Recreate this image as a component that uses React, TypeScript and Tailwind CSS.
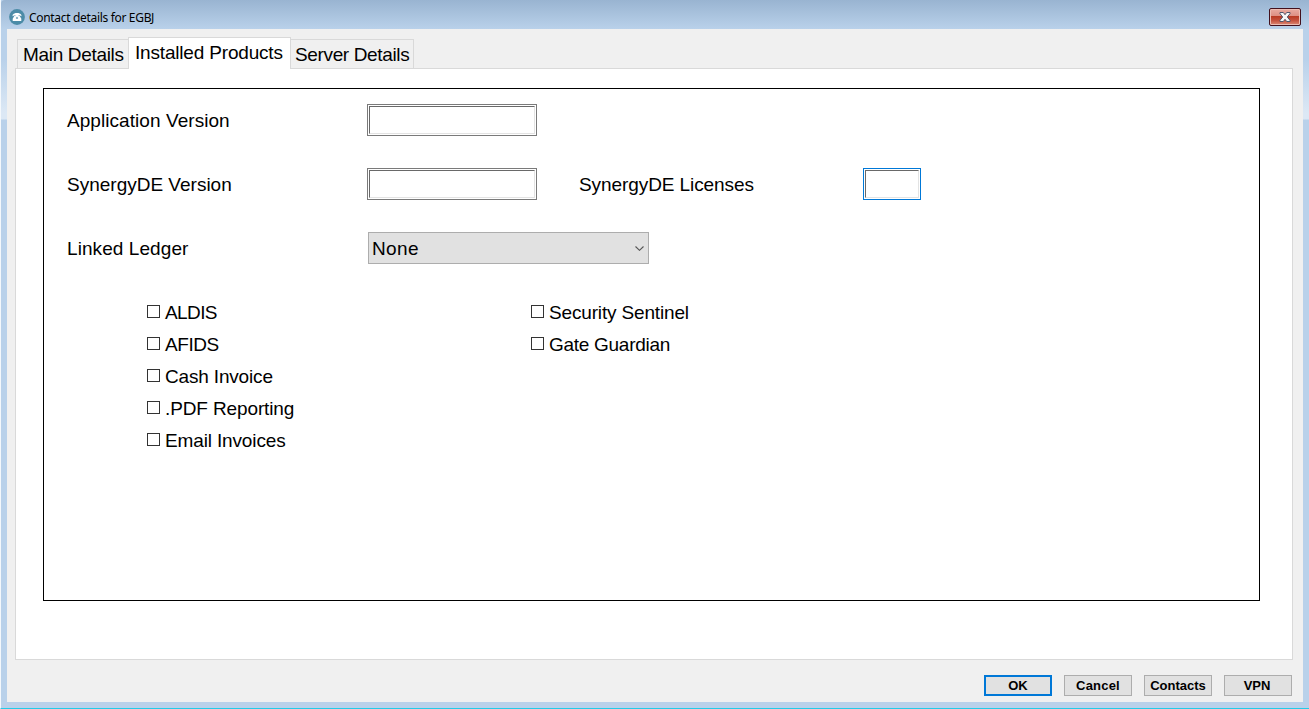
import React from "react";

function Field({ className = "", focused = false }: { className?: string; focused?: boolean }) {
  return (
    <div className={`h-8 shrink-0 border bg-white p-px ${focused ? "border-[#0078d7]" : "border-[#7a7a7a]"} ${className}`}>
      <input className="block h-full w-full border border-t-[#696969] border-r-[#e3e3e3] border-b-[#e3e3e3] border-l-[#696969] bg-white px-1 outline-none" />
    </div>
  );
}

function Check({ label, spacing }: { label: string; spacing: string }) {
  return (
    <label className="flex h-8 items-center">
      <span className="mr-[5px] mb-px h-[13px] w-[13px] shrink-0 border border-[#333] bg-white" />
      <span className={`whitespace-nowrap ${spacing}`}>{label}</span>
    </label>
  );
}

function DialogButton({ label, primary = false, spacing = "" }: { label: string; primary?: boolean; spacing?: string }) {
  return (
    <button
      className={`flex h-[21px] w-[68px] items-center justify-center bg-[#e1e1e1] text-[13px] leading-none font-bold text-black ${primary ? "border-2 border-[#0078d7]" : "border border-[#adadad]"} ${spacing}`}
    >
      {label}
    </button>
  );
}

function PhoneIcon() {
  return (
    <svg className="h-4 w-4" viewBox="0 0 16 16">
      <circle cx="8" cy="8" r="7.9" fill="#4b8ba7" />
      <path d="M3.6 7.200V5.900C4.600 4.400 6 3.900 8 3.900s3.400.5 4.400 2v1.300L10.600 6.300H5.400z" fill="#fff" />
      <path d="M6 5.800h4l2.300 3.900v2.300H3.700V9.700z" fill="#fff" />
      <circle cx="8" cy="8.900" r="1.200" fill="#8fb6c8" />
      <path d="M5.600 6.700h1M9.400 6.700h1" stroke="#4b8ba7" strokeWidth=".6" />
    </svg>
  );
}

function CloseButton() {
  return (
    <button className="flex h-[18px] w-8 items-center justify-center rounded-[2px] border border-[#43111d] bg-[linear-gradient(#e9aba1_0,#dd8e82_45%,#b93b24_46%,#c4503c_70%,#dc8b78_100%)] shadow-[inset_0_0_0_1px_#edbdb3]">
      <svg className="mb-px h-[10px] w-3" viewBox="0 0 12 10">
        <path d="M1 .5h3.300L6 2.700 7.700.5H11v1.200L8.300 5 11 8.300v1.200H7.700L6 7.300 4.300 9.500H1V8.300L3.700 5 1 1.700z" fill="#f5f5f5" stroke="#52566b" strokeWidth="1" />
      </svg>
    </button>
  );
}

export default function App() {
  return (
    <div className="flex h-[709px] w-[1309px] flex-col overflow-hidden border-b border-l border-b-[#22cce8] border-l-[#f4f8fc] bg-[#b9d1ea] font-['Liberation_Sans',Arial,sans-serif] text-[19px] leading-none text-black">
      <header className="flex h-[29px] shrink-0 items-start justify-between rounded-tl-[4px] bg-[linear-gradient(#99b4d1,#b9d1ea)] pr-2 pl-2">
        <div className="flex pt-[9px]">
          <PhoneIcon />
          <h1 className="ml-1 pt-px font-['Noto_Sans',sans-serif] text-[12px] leading-[16px] tracking-[-0.32px]">Contact details for EGBJ</h1>
        </div>
        <div className="pt-2">
          <CloseButton />
        </div>
      </header>
      <div className="flex h-[679px] pb-[6px]">
        <div className="w-[6px] shrink-0 bg-[linear-gradient(#b9d1ea_0,#b9d1ea_30px,#dce8f5_84px,#dce8f5_90px,#b9d1ea_91px)]" />
        <main className="flex w-[1296px] shrink-0 flex-col bg-[#f0f0f0] px-2 pt-2">
          <nav className="flex h-8 items-end pl-[2px]">
            <div className="h-[30px] w-[111px] border-t border-l border-[#d9d9d9] pt-[5px] pl-[5px] tracking-[-0.32px] whitespace-nowrap">Main Details</div>
            <div className="relative z-10 h-8 w-[163px] border-x border-t border-[#d9d9d9] bg-white pt-[5px] pl-[6px] tracking-[-0.18px] whitespace-nowrap">Installed Products</div>
            <div className="h-[30px] w-[123px] border-t border-r border-[#d9d9d9] pt-[5px] pl-[4px] tracking-[-0.36px] whitespace-nowrap">Server Details</div>
          </nav>
          <section className="-mt-px h-[592px] w-[1278px] border border-[#d9d9d9] bg-white pt-[19px] pl-[27px]">
            <div className="h-[513px] w-[1217px] border border-black pt-[15px] pl-[23px]">
              <div className="mb-8 flex h-8 items-center">
                <span className="w-[300px] tracking-[0.06px]">Application Version</span>
                <Field className="w-[170px]" />
              </div>
              <div className="mb-8 flex h-8 items-center">
                <span className="w-[300px]">SynergyDE Version</span>
                <Field className="w-[170px]" />
                <span className="ml-[42px] w-[284px] tracking-[-0.08px]">SynergyDE Licenses</span>
                <Field className="w-[58px]" focused />
              </div>
              <div className="mb-8 flex h-8 items-center">
                <span className="w-[301px] tracking-[0.08px]">Linked Ledger</span>
                <div className="flex h-8 w-[281px] items-center justify-between border border-[#adadad] bg-[#e1e1e1] pr-1 pl-[3px]">
                  <span className="tracking-[0.35px]">None</span>
                  <svg className="h-[5px] w-[9px]" viewBox="0 0 9 5">
                    <path d="M.5.5l4 3.800 4-3.800" fill="none" stroke="#555" strokeWidth="1.100" />
                  </svg>
                </div>
              </div>
              <div className="flex pl-20">
                <div className="w-96">
                  <Check label="ALDIS" spacing="tracking-[-0.6px]" />
                  <Check label="AFIDS" spacing="tracking-[-0.45px]" />
                  <Check label="Cash Invoice" spacing="tracking-[-0.17px]" />
                  <Check label=".PDF Reporting" spacing="tracking-[-0.12px]" />
                  <Check label="Email Invoices" spacing="tracking-[-0.14px]" />
                </div>
                <div>
                  <Check label="Security Sentinel" spacing="tracking-[-0.16px]" />
                  <Check label="Gate Guardian" spacing="tracking-[-0.28px]" />
                </div>
              </div>
            </div>
          </section>
          <footer className="mt-[15px] flex justify-end gap-3 pr-[3px]">
            <DialogButton label="OK" primary />
            <DialogButton label="Cancel" spacing="tracking-[0.2px]" />
            <DialogButton label="Contacts" />
            <DialogButton label="VPN" spacing="pr-0.5" />
          </footer>
        </main>
        <div className="w-[6px] shrink-0 bg-[linear-gradient(#b9d1ea_0,#b9d1ea_30px,#dce8f5_84px,#dce8f5_90px,#b9d1ea_91px)]" />
      </div>
    </div>
  );
}
